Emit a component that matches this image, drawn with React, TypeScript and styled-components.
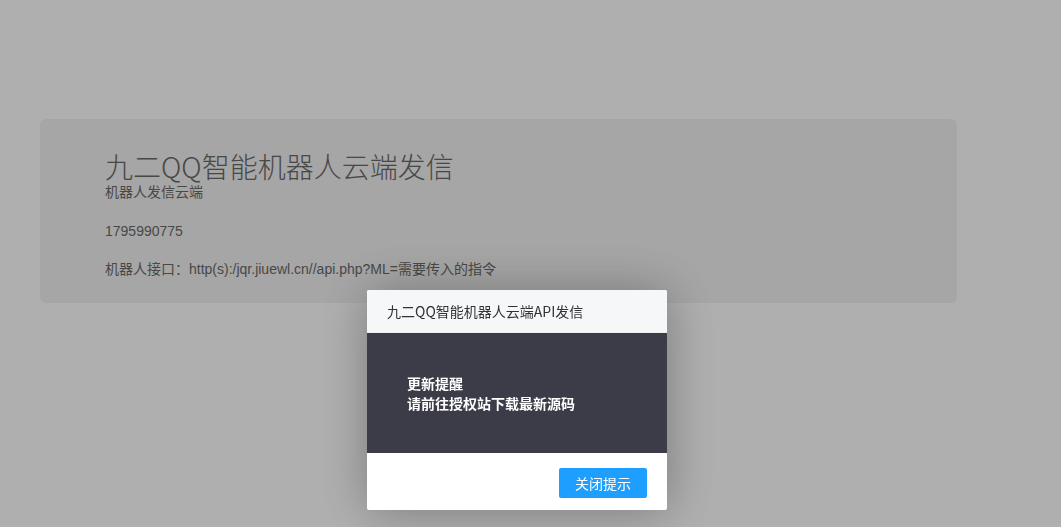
import React from "react";
import styled, { createGlobalStyle } from "styled-components";

const GlobalStyle = createGlobalStyle`
  html, body {
    margin: 0;
    padding: 0;
    background: #fbfbfb;
    font-family: "Noto Sans CJK SC", "Noto Sans", "Liberation Sans", sans-serif;
  }
  * {
    box-sizing: border-box;
  }
`;

const Page = styled.div`
  min-height: 527px;
  padding: 119px 104px 0 40px;
`;

const Card = styled.div`
  background: #eeeeee;
  border-radius: 6px;
  padding: 31px 65px 22px;
  color: #686868;
  font-family: "Liberation Sans", "Noto Sans CJK SC", sans-serif;
`;

const Title = styled.h1`
  margin: 0;
  font-family: "Noto Sans CJK SC", "Noto Sans", sans-serif;
  font-size: 28px;
  line-height: 32px;
  font-weight: 300;
  color: #686868;
`;

const Sub = styled.p`
  margin: 2px 0 0;
  font-size: 14px;
  line-height: 16px;
`;

const Line = styled.p<{ $gap: number }>`
  margin: ${(p) => p.$gap}px 0 0;
  font-size: 14px;
  line-height: 24px;
`;

const Shade = styled.div`
  position: fixed;
  inset: 0;
  background: rgba(0, 0, 0, 0.3);
`;

const Dialog = styled.div`
  position: fixed;
  left: 367px;
  top: 290px;
  width: 300px;
  background: #fff;
  box-shadow: 1px 1px 50px rgba(0, 0, 0, 0.3);
  border-radius: 2px;
  overflow: hidden;
`;

const DialogTitle = styled.div`
  height: 43px;
  line-height: 42px;
  padding: 0 20px;
  font-size: 14px;
  color: #333;
  background: #f6f7f9;
  border-bottom: 1px solid #eee;
`;

const Notice = styled.div`
  background: #3b3c47;
  color: #fff;
  padding: 40px;
  font-size: 14px;
  line-height: 20px;
  font-weight: 700;
  height: 120px;
`;

const BtnBar = styled.div`
  display: flex;
  justify-content: flex-end;
  padding: 15px 20px 12px;
`;

const Button = styled.button`
  height: 30px;
  width: 88px;
  border: none;
  border-radius: 2px;
  background: #1e9fff;
  color: #fff;
  font-family: inherit;
  font-size: 14px;
  cursor: pointer;
`;

export default function App() {
  return (
    <>
      <GlobalStyle />
      <Page>
        <Card>
          <Title>九二QQ智能机器人云端发信</Title>
          <Sub>机器人发信云端</Sub>
          <Line $gap={19}>1795990775</Line>
          <Line $gap={14}>机器人接口：http(s):/jqr.jiuewl.cn//api.php?ML=需要传入的指令</Line>
        </Card>
      </Page>
      <Shade />
      <Dialog>
        <DialogTitle>九二QQ智能机器人云端API发信</DialogTitle>
        <Notice>
          更新提醒
          <br />
          请前往授权站下载最新源码
        </Notice>
        <BtnBar>
          <Button>关闭提示</Button>
        </BtnBar>
      </Dialog>
    </>
  );
}
